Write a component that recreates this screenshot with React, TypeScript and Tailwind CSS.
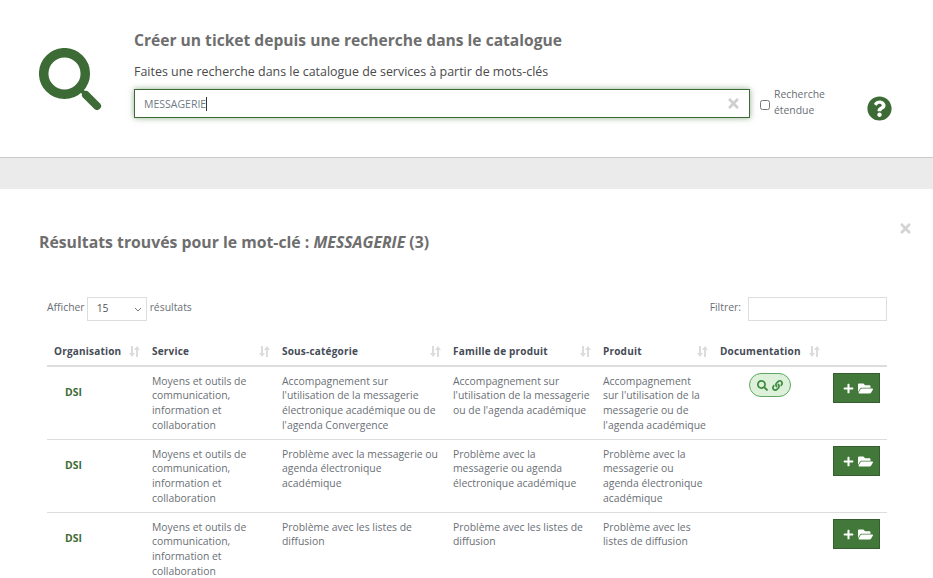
import { FaFolderOpen, FaLink, FaPlus, FaQuestionCircle, FaSearch, FaTimes } from "react-icons/fa";

const SERVICE = "Moyens et outils de communication, information et collaboration";

const rows = [
  {
    sub: "Accompagnement sur l'utilisation de la messagerie électronique académique ou de l'agenda Convergence",
    family: "Accompagnement sur l'utilisation de la messagerie ou de l'agenda académique",
    product: "Accompagnement sur l'utilisation de la messagerie ou de l'agenda académique",
    doc: true,
  },
  {
    sub: "Problème avec la messagerie ou agenda électronique académique",
    family: "Problème avec la messagerie ou agenda électronique académique",
    product: "Problème avec la messagerie ou agenda électronique académique",
    doc: false,
  },
  {
    sub: "Problème avec les listes de diffusion",
    family: "Problème avec les listes de diffusion",
    product: "Problème avec les listes de diffusion",
    doc: false,
  },
];

function SortIcon() {
  return (
    <svg width="11" height="11" viewBox="0 0 11 11" className="shrink-0 fill-[#dcdcdc]">
      <path d="M2 0h2v7h2L3 11 0 7h2z" />
      <path d="M7 11h2V4h2L8 0 5 4h2z" />
    </svg>
  );
}

function Th({ label, width, last }: { label: string; width: string; last?: boolean }) {
  return (
    <th className={`${width} h-[29px] pl-[7px] pr-[5px] text-left text-[10px] font-bold text-[#444b55] align-middle tracking-[0.2px]`}>
      <div className="flex items-center justify-between">
        <span>{label}</span>
        {!last && <SortIcon />}
      </div>
    </th>
  );
}

export default function App() {
  return (
    <div className="h-[578px] overflow-hidden bg-white font-['Open_Sans',sans-serif]">
      {/* Search header */}
      <div className="flex h-[158px] border-b border-[#cccccc] pl-[39px]">
        <svg width="63" height="63" viewBox="0 0 63 63" className="mt-[48px] shrink-0">
          <circle cx="25.5" cy="25.5" r="20.8" fill="none" stroke="#3d6b35" strokeWidth="9.5" />
          <path d="M38 38 L46 46" stroke="#3d6b35" strokeWidth="4" />
          <path d="M47 47 L58 58" stroke="#3d6b35" strokeWidth="8" strokeLinecap="round" />
        </svg>
        <div className="ml-[32px] w-[616px] shrink-0">
          <h1 className="mt-[29px] text-[15.6px] leading-[22px] font-bold text-[#6e6e6e]">
            Créer un ticket depuis une recherche dans le catalogue
          </h1>
          <p className="mt-[11px] text-[12.45px] leading-[20px] text-[#4a4a4a]">
            Faites une recherche dans le catalogue de services à partir de mots-clés
          </p>
          <div className="mt-[7px] flex h-[29px] items-center border border-[#3d6b35] pl-[9px] pr-[8px] shadow-[0_0_6px_rgba(61,107,53,0.55)]">
            <span className="mt-[1px] border-r border-[#333333] text-[10.5px] leading-[14px] text-[#6f7a85]">MESSAGERIE</span>
            <FaTimes className="ml-auto text-[15px] text-[#cfcfcf]" />
          </div>
        </div>
        <input type="checkbox" className="ml-[10px] mt-[100px] h-[10px] w-[10px] shrink-0" />
        <label className="ml-[4px] mt-[86px] w-[60px] text-[10.4px] leading-[16px] text-[#6a6f76]">Recherche étendue</label>
        <FaQuestionCircle className="ml-[33px] mt-[96px] shrink-0 text-[25px] text-[#3d6b35]" />
      </div>
      <div className="h-[31px] bg-[#ebebeb]" />

      {/* Results */}
      <div className="relative px-[46px]">
        <FaTimes className="absolute right-[20px] top-[32px] text-[15px] text-[#d4d4d4]" />
        <h2 className="ml-[-7px] pt-[42px] text-[15.8px] leading-[22px] font-bold text-[#6e6e6e]">
          Résultats trouvés pour le mot-clé : <em>MESSAGERIE</em> (3)
        </h2>

        <div className="mt-[44px] ml-[1px] flex items-center justify-between text-[10.4px] text-[#6a6f76]">
          <div className="flex items-center">
            <span className="-mt-[2px]">Afficher</span>
            <div className="ml-[2px] mr-[3px] flex h-[24px] w-[60px] items-center justify-between border border-[#dddddd] pl-[9px] pr-[4px] text-[#555555]">
              <span>15</span>
              <svg width="8" height="5" viewBox="0 0 8 5"><path d="M1 1l3 3 3-3" fill="none" stroke="#777777" /></svg>
            </div>
            <span className="-mt-[2px]">résultats</span>
          </div>
          <div className="flex items-center">
            <span className="-mt-[2px]">Filtrer:</span>
            <div className="ml-[7px] h-[24px] w-[139px] border border-[#dddddd]" />
          </div>
        </div>

        <table className="mt-[16px] ml-[1px] w-[840px] table-fixed border-collapse text-[10.4px]">
          <thead>
            <tr className="border-b-2 border-[#dddddd]">
              <Th label="Organisation" width="w-[98px]" />
              <Th label="Service" width="w-[130px]" />
              <Th label="Sous-catégorie" width="w-[171px]" />
              <Th label="Famille de produit" width="w-[150px]" />
              <Th label="Produit" width="w-[117px]" />
              <Th label="Documentation" width="w-[112px]" />
              <Th label="" width="w-[62px]" last />
            </tr>
          </thead>
          <tbody>
            {rows.map((row, i) => (
              <tr key={i} className="border-b border-[#dddddd] align-top leading-[14.75px] text-[#6a6f76]">
                <td className="pl-[18px] pt-[18px] font-bold text-[#3d6b35]">DSI</td>
                <td className="px-[7px] py-[6.5px]">{SERVICE}</td>
                <td className="px-[7px] py-[6.5px]">{row.sub}</td>
                <td className="pl-[7px] pr-[5px] py-[6.5px]">{row.family}</td>
                <td className="px-[7px] py-[6.5px]">{row.product}</td>
                <td className="pt-[6px] pl-[36px]">
                  {row.doc && (
                    <span className="flex h-[24px] w-[42px] items-center justify-center gap-[4px] rounded-full border border-[#5fa862] bg-[#ddf0d9] text-[11px] text-[#3d8b40]">
                      <FaSearch />
                      <FaLink />
                    </span>
                  )}
                </td>
                <td className="pt-[6px]">
                  <button className="ml-[8px] flex h-[30px] w-[47px] items-center justify-center gap-[4px] border border-[#355e2e] bg-[#43783b] pl-[3px] text-[11px] text-white">
                    <FaPlus />
                    <FaFolderOpen className="text-[15px]" />
                  </button>
                </td>
              </tr>
            ))}
          </tbody>
        </table>
      </div>
    </div>
  );
}
